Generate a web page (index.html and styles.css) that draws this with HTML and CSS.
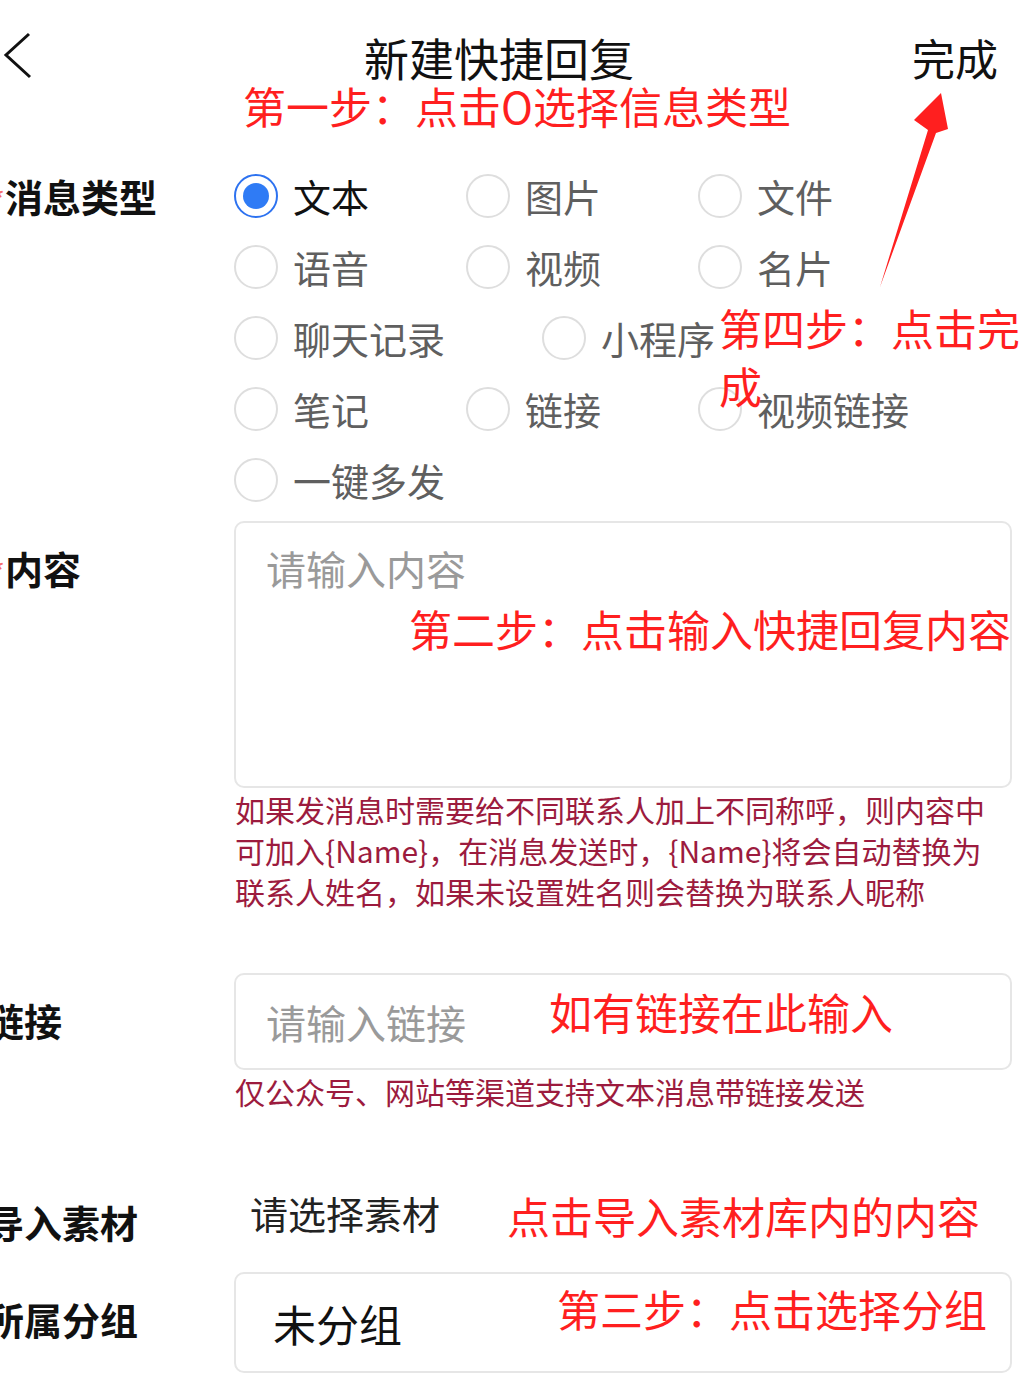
FILE: index.html
```html
<!DOCTYPE html>
<html lang="zh-CN">
  <head>
    <meta charset="UTF-8" />
    <title>新建快捷回复</title>
    <link rel="stylesheet" href="styles.css">
  </head>
  <body>
    <!-- 顶部导航 -->
    <header class="nav">
      <div class="nav-left">
        <svg class="back" width="34" height="50" viewBox="0 0 34 50">
          <polyline points="28,2 5,23 29,45" fill="none" stroke="#111" stroke-width="3" />
        </svg>
      </div>
      <h1 class="nav-title">新建快捷回复</h1>
      <div class="nav-right">完成</div>
    </header>

    <!-- 表单 -->
    <div class="form">
      <div class="row">
        <div class="label"><span class="req">*</span>消息类型</div>
        <div class="radio-group">
          <label class="radio checked"><span class="dot"></span>文本</label>
          <label class="radio"><span class="dot"></span>图片</label>
          <label class="radio"><span class="dot"></span>文件</label>
          <label class="radio"><span class="dot"></span>语音</label>
          <label class="radio"><span class="dot"></span>视频</label>
          <label class="radio"><span class="dot"></span>名片</label>
          <label class="radio"><span class="dot"></span>聊天记录</label>
          <label class="radio"><span class="dot"></span>小程序</label>
          <label class="radio"><span class="dot"></span>笔记</label>
          <label class="radio"><span class="dot"></span>链接</label>
          <label class="radio"><span class="dot"></span>视频链接</label>
          <label class="radio"><span class="dot"></span>一键多发</label>
        </div>
      </div>

      <div class="row row-content">
        <div class="label pad"><span class="req">*</span>内容</div>
        <div>
          <div class="textarea"><span class="placeholder">请输入内容</span></div>
          <p class="hint">如果发消息时需要给不同联系人加上不同称呼，则内容中可加入{Name}，在消息发送时，{Name}将会自动替换为联系人姓名，如果未设置姓名则会替换为联系人昵称</p>
        </div>
      </div>

      <div class="row row-link">
        <div class="label pad">链接</div>
        <div>
          <div class="input"><span class="placeholder">请输入链接</span></div>
          <p class="hint">仅公众号、网站等渠道支持文本消息带链接发送</p>
        </div>
      </div>

      <div class="row row-material">
        <div class="label small-pad">导入素材</div>
        <div class="select-text">请选择素材</div>
      </div>

      <div class="row row-group">
        <div class="label pad">所属分组</div>
        <div class="input group"><span>未分组</span></div>
      </div>
    </div>

    <!-- 红色标注 -->
    <div class="note note-1">第一步：点击O选择信息类型</div>
    <div class="note note-2">第二步：点击输入快捷回复内容</div>
    <div class="note note-4">第四步：点击完成</div>
    <div class="note note-link">如有链接在此输入</div>
    <div class="note note-material">点击导入素材库内的内容</div>
    <div class="note note-3">第三步：点击选择分组</div>
    <svg class="arrow" width="90" height="205" viewBox="0 0 90 205">
      <polygon points="10,199 58,42 44,32 71,5 78,41 66,45" fill="#ff1f1f" />
    </svg>
  </body>
</html>
```

FILE: styles.css
```css
/* 页面基础 */
body {
  margin: 0;
  background: #fff;
  font-family: "Noto Sans CJK SC", "Noto Sans", sans-serif;
  color: #111;
  overflow: hidden;
}

/* 顶部导航 */
.nav {
  display: grid;
  grid-template-columns: 1fr auto 1fr;
  align-items: center;
  height: 114px;
  padding-right: 30px;
}

.back {
  display: block;
  margin-left: 1px;
}

.nav-title {
  margin: 0;
  font-size: 45px;
  font-weight: 400;
  line-height: 1;
}

.nav-right {
  justify-self: end;
  font-size: 43px;
  line-height: 1;
}

/* 表单布局 */
.form {
  margin-left: -14px;
  padding-top: 60px;
  width: 1026px;
}

.row {
  display: grid;
  grid-template-columns: 248px 778px;
}

.label {
  font-size: 38px;
  font-weight: 700;
  line-height: 44px;
  white-space: nowrap;
}

.label.pad {
  padding-top: 25px;
}

.label.small-pad {
  padding-top: 9px;
}

.req {
  display: inline-block;
  width: 19px;
  text-align: right;
  color: #f56c6c;
  font-weight: 400;
  font-size: 30px;
}

/* 单选按钮 */
.radio-group {
  display: flex;
  flex-wrap: wrap;
  column-gap: 97px;
  row-gap: 27px;
  width: 700px;
}

.radio {
  display: flex;
  align-items: center;
  height: 44px;
  font-size: 38px;
  line-height: 44px;
  color: #5f5f5f;
}

.dot {
  box-sizing: border-box;
  width: 44px;
  height: 44px;
  margin-right: 15px;
  border: 2px solid #dedede;
  border-radius: 50%;
  display: flex;
  align-items: center;
  justify-content: center;
}

.radio.checked {
  color: #111;
}

.radio.checked .dot {
  border-color: #2d72f0;
}

.radio.checked .dot::after {
  content: "";
  width: 26px;
  height: 26px;
  border-radius: 50%;
  background: #2f7bf5;
}

/* 输入框 */
.row-content {
  margin-top: 19px;
}

.textarea,
.input {
  box-sizing: border-box;
  border: 2px solid #e6e6e6;
  border-radius: 10px;
}

.textarea {
  height: 267px;
  padding: 23px 30px 0;
}

.placeholder {
  font-size: 40px;
  line-height: 44px;
  color: #9a9a9a;
}

.input {
  height: 97px;
  display: flex;
  align-items: center;
  padding-left: 30px;
}

.hint {
  margin: 1px 0 0 1px;
  font-size: 30px;
  line-height: 41px;
  color: #9c1b3e;
  width: 770px;
}

.row-link {
  margin-top: 61px;
}

.row-material {
  margin-top: 79px;
}

.select-text {
  padding-left: 16px;
  font-size: 38px;
  line-height: 44px;
  color: #222;
}

.row-group {
  margin-top: 28px;
}

.input.group {
  height: 101px;
  padding-left: 37px;
  font-size: 43px;
  color: #111;
}

/* 红色标注（覆盖在界面上） */
.note {
  position: absolute;
  color: #ff1f1f;
  font-size: 43px;
  line-height: 1;
  white-space: nowrap;
}

.note-1 { left: 243px; top: 84px; }
.note-2 { left: 409px; top: 607px; }
.note-4 { left: 719px; top: 298px; width: 305px; white-space: normal; line-height: 58px; }
.note-link { left: 549px; top: 990px; }
.note-material { left: 507px; top: 1194px; }
.note-3 { left: 557px; top: 1287px; }

.arrow {
  position: absolute;
  left: 870px;
  top: 88px;
}
```
